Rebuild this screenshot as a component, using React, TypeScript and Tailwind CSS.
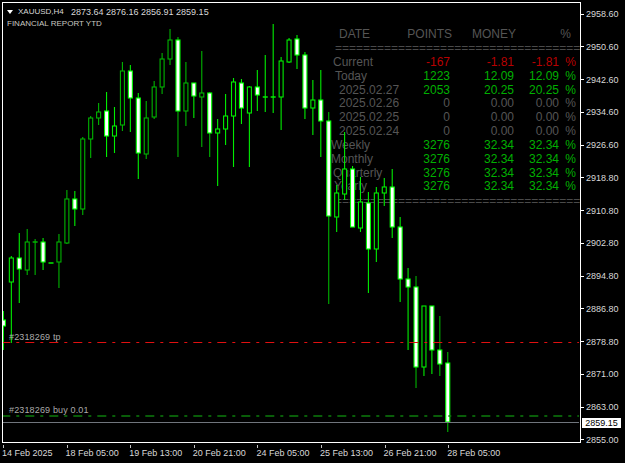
const candles: [number, number, number, number, number][] = [
  // wick top, body top, body bottom, wick bottom, filled
  [311, 320, 326, 350, 1], [256, 258, 282, 343, 0], [233, 258, 269, 303, 1], [229, 242, 270, 275, 0],
  [239, 242, 242, 275, 0], [238, 242, 262, 270, 1], [263, 263, 263, 263, 0], [234, 242, 262, 288, 0],
  [190, 199, 243, 244, 0], [191, 199, 209, 226, 1], [137, 139, 209, 215, 0], [116, 118, 139, 158, 0],
  [103, 112, 118, 125, 0], [92, 111, 136, 157, 1], [107, 126, 136, 153, 0], [62, 71, 125, 131, 0],
  [65, 71, 98, 132, 1], [93, 98, 153, 179, 1], [101, 118, 154, 159, 0], [81, 87, 117, 119, 0],
  [53, 59, 87, 94, 0], [29, 40, 59, 65, 0], [37, 40, 111, 157, 1], [62, 83, 111, 126, 0],
  [83, 83, 96, 118, 1], [51, 93, 97, 147, 0], [92, 93, 133, 157, 1], [119, 129, 133, 186, 0],
  [94, 116, 129, 145, 0], [78, 82, 116, 167, 0], [79, 83, 108, 124, 1], [86, 87, 113, 167, 0],
  [70, 87, 95, 111, 1], [55, 97, 97, 112, 0], [24, 97, 97, 113, 0], [57, 61, 97, 130, 0],
  [38, 40, 62, 63, 0], [35, 39, 55, 69, 1], [52, 55, 108, 119, 1], [80, 100, 108, 135, 0],
  [70, 100, 121, 157, 1], [112, 121, 216, 304, 1], [185, 193, 217, 232, 0], [132, 169, 194, 200, 0],
  [166, 169, 227, 227, 1], [177, 202, 228, 232, 0], [192, 203, 249, 293, 1], [187, 193, 249, 262, 0],
  [178, 187, 193, 206, 0], [169, 187, 227, 238, 1], [217, 227, 279, 302, 1], [268, 279, 287, 350, 1],
  [276, 287, 367, 388, 1], [306, 306, 367, 376, 0], [306, 306, 350, 374, 1], [316, 350, 364, 376, 1],
  [352, 363, 422, 432, 1],
]

const dim = new Set([3, 4, 7, 8, 10, 11, 12, 15, 18, 19, 20, 21, 22, 23, 25, 26, 41, 52, 55, 56])

const prices = ['2958.60', '2950.60', '2942.60', '2934.60', '2926.60', '2918.80', '2910.80', '2902.80', '2894.80', '2886.80', '2878.80', '2871.00', '2863.00', '2855.00']
const times = ['14 Feb 2025', '18 Feb 05:00', '19 Feb 13:00', '20 Feb 21:00', '24 Feb 05:00', '25 Feb 13:00', '26 Feb 21:00', '28 Feb 05:00']

const red = 'text-[#b80000]'
const green = 'text-[#00b000]'
const gray = 'text-[#555555]'

const rows = [
  { label: 'Current', pad: 'pl-[3px]', points: '-167', money: '-1.81', pct: '-1.81', color: red },
  { label: 'Today', pad: 'pl-[5px]', points: '1223', money: '12.09', pct: '12.09', color: green },
  { label: '2025.02.27', pad: 'pl-[9px]', points: '2053', money: '20.25', pct: '20.25', color: green },
  { label: '2025.02.26', pad: 'pl-[9px]', points: '0', money: '0.00', pct: '0.00', color: gray },
  { label: '2025.02.25', pad: 'pl-[9px]', points: '0', money: '0.00', pct: '0.00', color: gray },
  { label: '2025.02.24', pad: 'pl-[9px]', points: '0', money: '0.00', pct: '0.00', color: gray },
  { label: 'Weekly', pad: 'pl-[1px]', points: '3276', money: '32.34', pct: '32.34', color: green },
  { label: 'Monthly', pad: 'pl-[1px]', points: '3276', money: '32.34', pct: '32.34', color: green },
  { label: 'Quarterly', pad: 'pl-[3px]', points: '3276', money: '32.34', pct: '32.34', color: green },
  { label: 'Yearly', pad: 'pl-[4px]', points: '3276', money: '32.34', pct: '32.34', color: green },
]

function Candles() {
  return (
    <svg viewBox="3 3 576 438" className="absolute left-0 top-0 w-[576px] h-[438px]">
      {candles.map(([wt, bt, bb, wb, filled], i) => {
        const x = 3.4 + 7.935 * i
        const stroke = dim.has(i) ? '#00b400' : '#00ee00'
        return (
          <g key={i}>
            <line x1={x} x2={x} y1={wt} y2={wb} stroke={stroke} strokeWidth={1.1} />
            {bt === bb ? (
              <line x1={x - 2.5} x2={x + 2.5} y1={bt} y2={bt} stroke={stroke} strokeWidth={1.5} />
            ) : (
              <rect x={x - 2} y={bt} width={4} height={bb - bt} fill={filled ? '#ffffff' : '#000000'} stroke={filled ? '#00ff00' : stroke} strokeWidth={1.1} />
            )}
          </g>
        )
      })}
      <line x1="1.3" x2="579" y1="342.5" y2="342.5" stroke="#e01010" strokeDasharray="9 6 3 6" />
      <line x1="1.3" x2="579" y1="416" y2="416" stroke="#0c7c0c" strokeWidth={1.3} strokeDasharray="9 6 3 6" />
      <line x1="3" x2="579" y1="422.5" y2="422.5" stroke="#70757c" />
    </svg>
  )
}

function ReportTable() {
  return (
    <div className="absolute left-[327px] top-[24px] w-[250px] font-['Liberation_Sans',sans-serif] text-[12px] leading-[14px]">
      <div className="grid grid-cols-[60px_62px_64px] h-[14px] text-[#555555]">
        <span className="pl-[9px]">DATE</span>
        <span className="text-right">POINTS</span>
        <span className="text-right">MONEY</span>
        <span className="absolute right-[9px] top-0">%</span>
      </div>
      <div className="h-[14px] pl-[5px] overflow-hidden whitespace-nowrap text-[#4a4a4a]">{'='.repeat(35)}</div>
      {rows.map((r) => (
        <div key={r.label} className={`grid grid-cols-[60px_60px_64px_45px_17px] h-[13.83px] ${r.color}`}>
          <span className={`${r.pad} whitespace-nowrap text-[#555555]`}>{r.label}</span>
          <span className="text-right">{r.points}</span>
          <span className="text-right">{r.money}</span>
          <span className="text-right">{r.pct}</span>
          <span className="text-right">%</span>
        </div>
      ))}
      <div className="h-[14px] pl-[5px] mt-px overflow-hidden whitespace-nowrap text-[#4a4a4a]">{'='.repeat(35)}</div>
    </div>
  )
}

export default function App() {
  return (
    <div className="relative w-[625px] h-[463px] bg-black overflow-hidden pt-[2px] pl-[2px] text-[#d8d8d8] font-['Liberation_Sans',sans-serif] text-[9px] leading-[10px]">
      <div className="flex">
        <div className="relative w-[579px] h-[441px] border border-white">
          <ReportTable />
          <Candles />
          <div className="absolute left-[4px] top-[4px] flex items-center gap-[5px] whitespace-nowrap">
            <span className="w-0 h-0 border-x-[3.5px] border-x-transparent border-t-[4px] border-t-white" />
            <span className="text-[8px] w-[48px]">XAUUSD,H4</span>
            <span>2873.64 2876.16 2856.91 2859.15</span>
          </div>
          <div className="absolute left-[4px] top-[16px] whitespace-nowrap text-[#c8c8c0] text-[8px]">FINANCIAL REPORT YTD</div>
          <div className="absolute left-0 top-[329px] pl-[6px] whitespace-nowrap tracking-[0.15px] text-[#aaaaaa]">#2318269 tp</div>
          <div className="absolute left-0 top-[402px] pl-[6px] whitespace-nowrap tracking-[0.15px] text-[#aaaaaa]">#2318269 buy 0.01</div>
        </div>
        <div className="flex flex-col gap-[22.78px] pt-[7px]">
          {prices.map((p) => (
            <div key={p} className="flex items-center h-[10px] gap-[2px]">
              <span className="w-[3px] h-px bg-white" />
              <span>{p}</span>
            </div>
          ))}
        </div>
      </div>
      <div className="flex">
        {times.map((t) => (
          <div key={t} className="w-[63.6px] flex flex-col">
            <span className="ml-[1px] w-px h-[3px] bg-[#c0c0c0]" />
            <span className="whitespace-nowrap">{t}</span>
          </div>
        ))}
      </div>
      <div className="absolute left-[582px] top-[418px] w-[39px] h-[10px] bg-white text-black text-center">2859.15</div>
    </div>
  )
}
